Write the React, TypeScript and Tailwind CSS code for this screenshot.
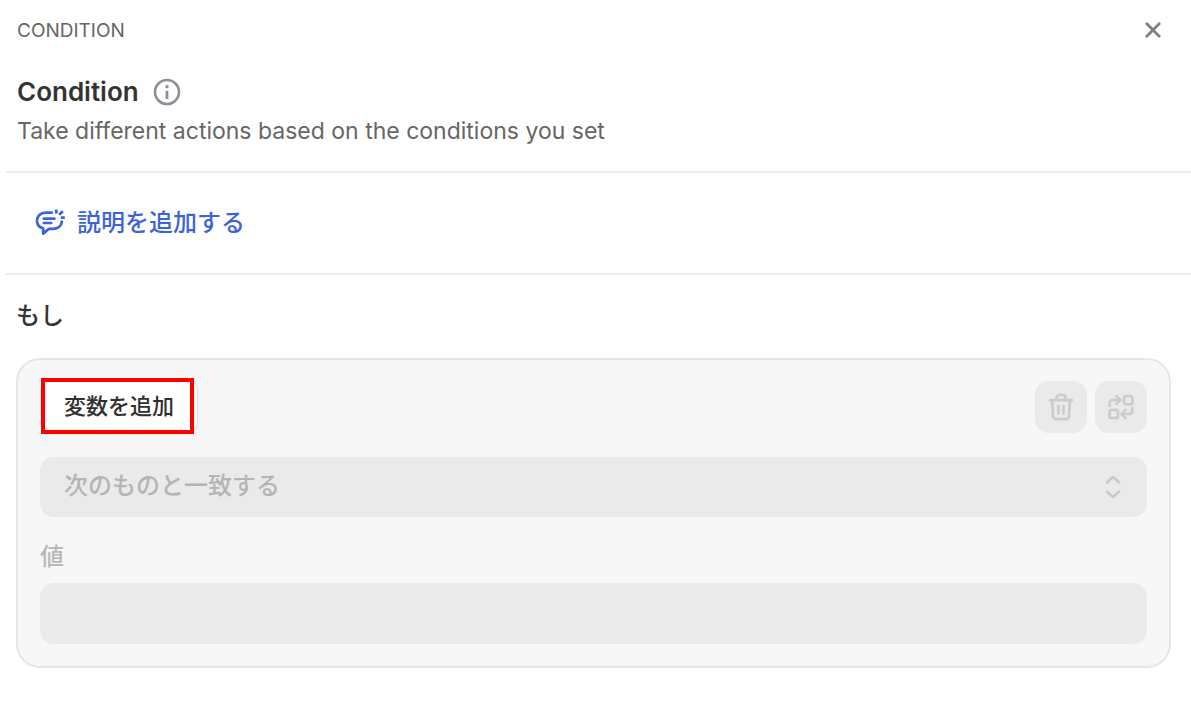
import React from 'react';

const INTER = "font-['Inter','Noto_Sans_CJK_JP',sans-serif]";

function CloseIcon() {
  return (
    <svg width="16" height="16" viewBox="0 0 16 16" fill="none" stroke="currentColor" strokeWidth="2.8" strokeLinecap="round" aria-hidden="true">
      <path d="M1.800 1.800 14.200 14.200M14.200 1.800 1.800 14.200" />
    </svg>
  );
}

function InfoIcon() {
  return (
    <svg width="28" height="28" viewBox="0 0 28 28" fill="none" stroke="currentColor" aria-hidden="true">
      <circle cx="14" cy="14" r="12" strokeWidth="2.600" />
      <path d="M14 12.800V21" strokeWidth="2.800" />
      <path d="M14 7.200v3" strokeWidth="3" />
    </svg>
  );
}

function CommentIcon() {
  return (
    <svg width="30" height="28" viewBox="0 0 30 28" fill="none" stroke="currentColor" strokeWidth="2.700" strokeLinecap="round" strokeLinejoin="round" aria-hidden="true">
      <path d="M16.800 3.600H10.600C5.400 3.600 2 7.200 2 11.600c0 4.200 2.600 7 6.200 7.700v5.300l5.800-4.800h3.600c5.400 0 9-2.800 9.200-7.200" />
      <path d="M8.800 9.700h10.600M8.800 14h7.400" />
      <path d="M21.300 .4v4.200M27.800 2.200l-3.600 3.600M29.800 8.700h-4" strokeLinecap="butt" />
    </svg>
  );
}

function TrashIcon() {
  return (
    <svg width="26" height="28" viewBox="0 0 26 28" fill="none" stroke="currentColor" strokeWidth="2.700" strokeLinecap="round" strokeLinejoin="round" aria-hidden="true">
      <path d="M2.200 7.200h21.600" />
      <path d="M8.600 7V5.200C8.600 3.200 9.700 2 11.400 2h3.200c1.700 0 2.800 1.200 2.800 3.200V7" />
      <path d="M4.200 7.600 5 23c.1 2.200 1 3.200 3 3.200h10c2 0 2.900-1 3-3.200l.8-15.400" />
      <path d="M10.500 11.800v10M15.500 11.800v10" strokeLinecap="butt" />
    </svg>
  );
}

function SwapIcon() {
  return (
    <svg width="26" height="26" viewBox="0 0 26 26" fill="none" stroke="currentColor" strokeWidth="2.700" strokeLinecap="round" strokeLinejoin="round" aria-hidden="true">
      <rect x="16" y="2" width="8.400" height="8.400" rx="2.200" />
      <rect x="1.600" y="15.800" width="8.400" height="8.400" rx="2.200" />
      <path d="M1.600 12V9.400c0-2.200 1.300-3.400 3.600-3.400h6.400M8.400 2l4 4-4 4" />
      <path d="M24.400 14v2.600c0 2.200-1.300 3.400-3.600 3.400h-6.400M17.600 16l-4 4 4 4" />
    </svg>
  );
}

function ChevronsIcon() {
  return (
    <svg width="16" height="24" viewBox="0 0 16 24" fill="none" stroke="currentColor" strokeWidth="2.500" strokeLinecap="round" strokeLinejoin="round" aria-hidden="true">
      <path d="M2 7.500 8 1.800l6 5.700M2 16.500l6 5.700 6-5.700" />
    </svg>
  );
}

export default function App() {
  return (
    <main className={`min-h-screen bg-white text-[#333333] ${INTER}`}>
      <header className="pl-[6px]">
        <div className="flex h-[62px] items-start justify-between pt-[18px] pr-[30px] pl-[11px]">
          <p className="text-[19px] leading-[26px] text-[#666666]">CONDITION</p>
          <button type="button" aria-label="Close" className="flex h-6 w-4 items-center justify-center text-[#808080]">
            <CloseIcon />
          </button>
        </div>
        <div className="border-b-2 border-[#ededed] pt-[14px] pb-[25px] pl-[11px]">
          <div className="flex items-center gap-[14px]">
            <h1 className="text-[26px] leading-8 font-semibold">Condition</h1>
            <button type="button" aria-label="Info" className="text-[#8d9098]">
              <InfoIcon />
            </button>
          </div>
          <p className="mt-2 text-[23px] leading-[30px] text-[#666666]">Take different actions based on the conditions you set</p>
        </div>
        <div className="flex h-[102px] items-center border-b-2 border-[#ededed] pl-[29px]">
          <button type="button" className="flex items-center gap-3 text-2xl font-medium text-[#3b64d8]">
            <CommentIcon />
            <span>説明を追加する</span>
          </button>
        </div>
      </header>

      <section className="pt-[23px] pr-5 pb-[42px] pl-4">
        <h2 className="text-2xl leading-9 font-medium">もし</h2>
        <div className="mt-6 rounded-3xl border-2 border-[#e6e6e6] bg-[#f7f7f7] p-[22px] pt-[18px]">
          <div className="flex items-center justify-between">
            <div className="relative">
              <button type="button" className="block h-[56px] rounded-xl border border-[#e0e0e0] bg-white px-[23px] text-[22px] font-medium text-[#303030] shadow-xs">
                変数を追加
              </button>
              <span className="pointer-events-none absolute inset-y-0 right-1 left-px border-4 border-[#ff0000]" />
            </div>
            <div className="flex gap-2 pt-[2px] text-[#cccccc]">
              <button type="button" disabled aria-label="Delete" className="flex size-[52px] items-center justify-center rounded-[14px] bg-[#eaeaea]">
                <TrashIcon />
              </button>
              <button type="button" disabled aria-label="Convert" className="flex size-[52px] items-center justify-center rounded-[14px] bg-[#eaeaea]">
                <SwapIcon />
              </button>
            </div>
          </div>

          <div className="relative mt-[23px]">
            <select disabled aria-label="Operator" className="block h-[60px] w-full appearance-none rounded-[14px] bg-[#eaeaea] px-6 pb-[2px] text-2xl font-medium text-[#b5b5b5] opacity-100">
              <option>次のものと一致する</option>
            </select>
            <span className="pointer-events-none absolute inset-y-0 right-[26px] flex items-center text-[#c9c9c9]">
              <ChevronsIcon />
            </span>
          </div>

          <label htmlFor="value" className="mt-[22px] block text-2xl leading-9 font-medium text-[#b8b8b8]">値</label>
          <input id="value" type="text" disabled className="mt-2 block h-[61px] w-full rounded-[14px] bg-[#eaeaea] px-6 text-2xl" />
        </div>
      </section>
    </main>
  );
}
